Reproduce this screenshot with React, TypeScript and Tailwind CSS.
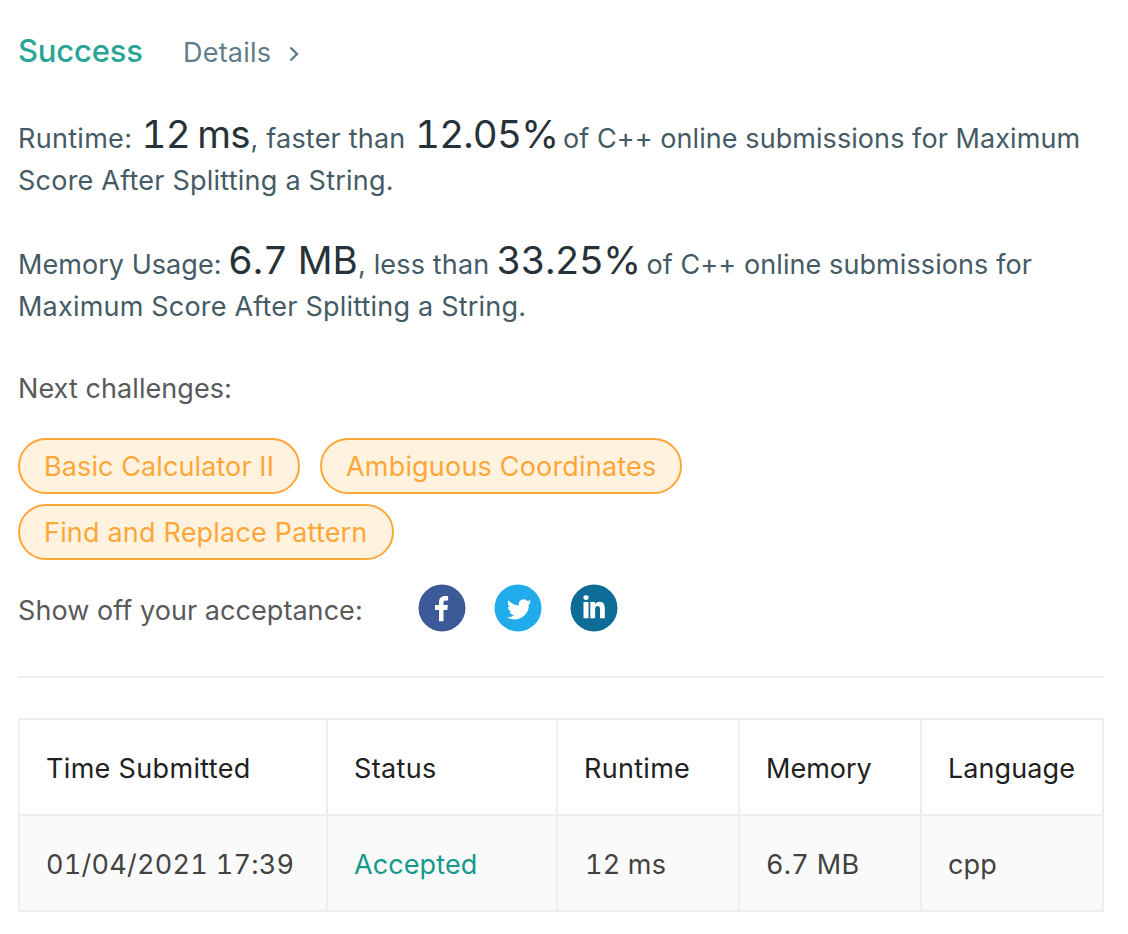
import React from "react";

const challenges = [
  { name: "Basic Calculator II", style: "w-[282px] tracking-[0.1px]" },
  { name: "Ambiguous Coordinates", style: "w-[362px] tracking-[0.19px]" },
  { name: "Find and Replace Pattern", style: "w-[376px] tracking-[0.19px]" },
];

const columns = [
  { title: "Time Submitted", value: "01/04/2021 17:39", head: "pl-[26px] tracking-[0.33px]", cell: "pl-[26px] tracking-[0.26px] tabular-nums text-[#424242]" },
  { title: "Status", value: "Accepted", head: "pl-[26px] tracking-[0.35px]", cell: "pl-[26px] tracking-[0.1px] text-[#129a8c]" },
  { title: "Runtime", value: "12 ms", head: "pl-[26px] tracking-[0.3px]", cell: "pl-[27px] tracking-[0.2px] tabular-nums text-[#424242]" },
  { title: "Memory", value: "6.7 MB", head: "pl-[26px] tracking-[0px]", cell: "pl-[26px] tracking-[0.3px] tabular-nums text-[#424242]" },
  { title: "Language", value: "cpp", head: "pl-[26px] tracking-[0.08px]", cell: "pl-[26px] tracking-[0.2px] text-[#424242]" },
];

function Figure({ className, children }: { className: string; children: React.ReactNode }) {
  return <strong className={`shrink-0 text-[38.5px] font-normal tabular-nums text-[#263238] ${className}`}>{children}</strong>;
}

export default function App() {
  return (
    <main className="h-[934px] w-[1128px] overflow-hidden bg-white px-[18px] pt-[30px] font-['Inter',sans-serif] text-[27px] leading-[42px] tracking-[0.2px] text-[#455a64]">
      <header className="flex h-[44px] items-center">
        <h1 className="-mt-0.5 w-[165px] text-[31px] font-medium tracking-[-0.2px] text-[#2aa595]">Success</h1>
        <a className="mt-0.5 w-[106px] text-[#607d8b]">Details</a>
        <svg className="mt-1" width="10" height="16" viewBox="0 0 10 16" fill="none" stroke="#607d8b" strokeWidth="2.4"><path d="M1.5 1.5 8 8l-6.5 6.5" /></svg>
      </header>

      <section className="mt-[39px] whitespace-nowrap">
        <div className="flex h-[42px] items-baseline">
          <span className="w-[123.5px] shrink-0 tracking-[0.3px]">Runtime:</span>
          <Figure className="w-[109px] tracking-[-0.7px] [word-spacing:-2.5px]">12 ms</Figure>
          <span className="w-[164.5px] shrink-0">, faster than</span>
          <Figure className="w-[148px] tracking-[-0.8px]">12.05%</Figure>
          <span className="tracking-[0.07px]">of C++ online submissions for Maximum</span>
        </div>
        <div className="pt-[5px] tracking-[0.23px]">Score After Splitting a String.</div>
      </section>

      <section className="mt-[37px] whitespace-nowrap">
        <div className="flex h-[42px] items-baseline">
          <span className="w-[210px] shrink-0 tracking-[0.05px]">Memory Usage:</span>
          <Figure className="w-[130px] tracking-[-0.1px] [word-spacing:-0.5px]">6.7 MB</Figure>
          <span className="w-[138.5px] shrink-0 tracking-[0.15px]">, less than</span>
          <Figure className="w-[150px] tracking-[-0.7px]">33.25%</Figure>
          <span className="tracking-[0.09px]">of C++ online submissions for</span>
        </div>
        <div className="pt-[5px]">Maximum Score After Splitting a String.</div>
      </section>

      <p className="mt-10 tracking-[0.07px] text-[#595959]">Next challenges:</p>
      <div className="mt-[28px] flex w-[700px] flex-wrap gap-x-5 gap-y-[10px]">
        {challenges.map((c) => (
          <a key={c.name} className={`flex h-14 items-center whitespace-nowrap rounded-full border-2 border-[#ffa638] bg-[#fff3e0] pl-6 pt-0.5 text-[#ffa638] ${c.style}`}>{c.name}</a>
        ))}
      </div>

      <div className="mt-6 flex h-12 items-center">
        <span className="mt-1.5 w-[400px] tracking-[0.06px] text-[#595959]">Show off your acceptance:</span>
        <div className="flex gap-7">
          <svg width="48" height="48" viewBox="0 0 48 48">
            <circle cx="24" cy="24" r="23.5" fill="#3d5a98" />
            <path fill="#fff" d="M21 37.2V26.1h-4v-5h4v-3c0-4 2.4-6.2 6-6.2 1.5 0 2.6.1 3.1.2v4.3h-2.3c-1.9 0-2.3.9-2.3 2.3v2.4h4.4l-.6 5h-3.8v11.1z" />
          </svg>
          <svg width="48" height="48" viewBox="0 0 48 48">
            <circle cx="24" cy="24" r="23.5" fill="#20acea" />
            <path fill="#fff" transform="translate(12.8 12.8)" d="M24.5 4.9c-.9.4-1.9.7-2.9.8 1-.6 1.8-1.6 2.2-2.8-1 .6-2.1 1-3.2 1.2a5.03 5.03 0 0 0-8.6 4.6A14.3 14.3 0 0 1 1.7 3.5a5.03 5.03 0 0 0 1.6 6.7c-.8 0-1.6-.2-2.3-.6v.1c0 2.4 1.7 4.5 4 4.9-.7.2-1.5.2-2.3.1.6 2 2.5 3.5 4.7 3.5A10.1 10.1 0 0 1 0 20.3a14.3 14.3 0 0 0 22-12.7c1-.7 1.8-1.6 2.5-2.7z" />
          </svg>
          <svg width="48" height="48" viewBox="0 0 48 48">
            <circle cx="24" cy="24" r="23.5" fill="#0e6c98" />
            <g fill="#fff">
              <ellipse cx="16" cy="13.6" rx="2.6" ry="2.4" />
              <path d="M13.5 18.1h5v16.2h-5zM20.3 18.1H25v2.1c.8-1.5 2.4-2.5 4.4-2.5 4.4 0 5.4 2.9 5.4 6.8v9.8H30v-8.2c0-2.2-.2-4-2.3-4s-2.6 1.7-2.6 4v8.2h-4.8z" />
            </g>
          </svg>
        </div>
      </div>

      <hr className="mt-[44px] w-[1086px] border-t-2 border-[#eeeeee]" />

      <table className="mt-10 w-[1086px] table-fixed border-collapse text-left">
        <colgroup>
          <col className="w-[308px]" />
          <col className="w-[230px]" />
          <col className="w-[182px]" />
          <col className="w-[182px]" />
          <col className="w-[182px]" />
        </colgroup>
        <thead>
          <tr className="h-24">
            {columns.map((c) => <th key={c.title} className={`whitespace-nowrap border-2 border-[#eeeeee] pr-0 pb-0 pt-1 font-normal text-[#212121] ${c.head}`}>{c.title}</th>)}
          </tr>
        </thead>
        <tbody>
          <tr className="h-24 bg-[#fafafa]">
            {columns.map((c) => <td key={c.title} className={`whitespace-nowrap border-2 border-[#eeeeee] pr-0 pb-0 pt-1 ${c.cell}`}>{c.value}</td>)}
          </tr>
        </tbody>
      </table>
    </main>
  );
}
